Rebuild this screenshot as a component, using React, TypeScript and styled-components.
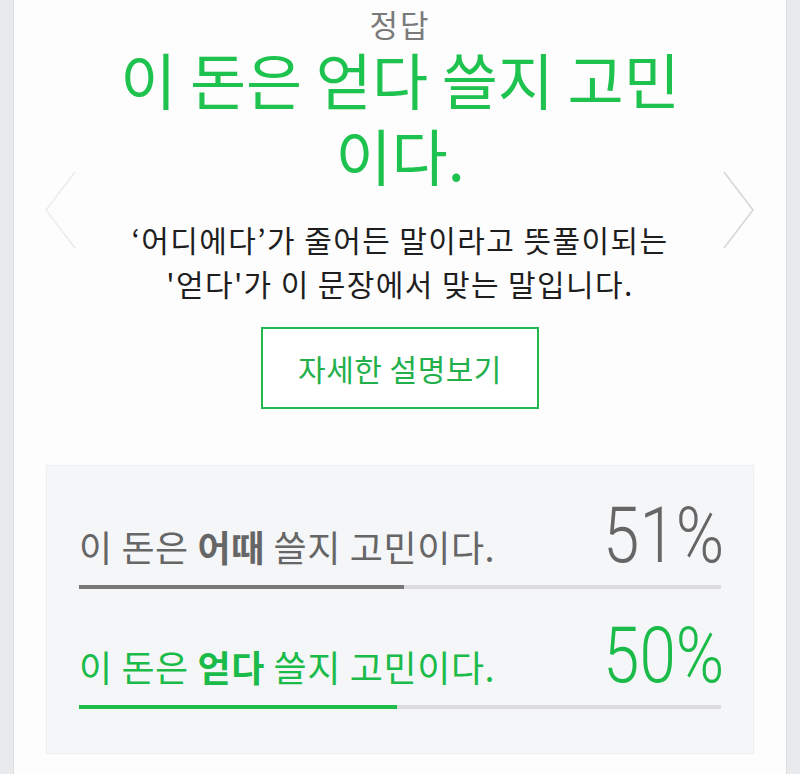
import React from "react";
import styled, { createGlobalStyle } from "styled-components";

const GlobalStyle = createGlobalStyle`
  html, body {
    margin: 0;
    padding: 0;
    background: #e9eaec;
    font-family: "Noto Sans CJK KR", "Noto Sans", sans-serif;
  }
  * { box-sizing: border-box; }
`;

const Page = styled.div`
  padding: 0 13px;
  min-height: 774px;
  overflow: hidden;
`;

const Card = styled.section`
  position: relative;
  background: #fdfdfd;
  border-left: 1px solid #dcdde0;
  border-right: 1px solid #dcdde0;
  min-height: 800px;
  padding-top: 6px;
  display: flex;
  flex-direction: column;
  align-items: center;
`;

const Label = styled.div`
  font-size: 31px;
  line-height: 36px;
  letter-spacing: 2px;
  color: #7a7a7a;
  text-align: center;
`;

const Answer = styled.h1`
  margin: -1px 0 0;
  font-size: 61px;
  line-height: 76px;
  font-weight: 400;
  color: #1ec24e;
  text-align: center;
`;

const Explain = styled.p`
  margin: 24px 0 0;
  font-size: 30px;
  line-height: 44px;
  letter-spacing: 1.4px;
  color: #1e1e1e;
  text-align: center;
`;

const DetailButton = styled.button`
  margin-top: 22px;
  width: 278px;
  height: 82px;
  border: 2px solid #22b84b;
  background: #fff;
  color: #22b04a;
  font-family: inherit;
  font-size: 30px;
  letter-spacing: 0.5px;
  cursor: pointer;
`;

const Arrow = styled.button<{ $side: "left" | "right" }>`
  position: absolute;
  top: 170px;
  ${(p) => (p.$side === "left" ? "left: 30px;" : "right: 31px;")}
  width: 34px;
  height: 80px;
  padding: 0;
  border: 0;
  background: transparent;
`;

const Stats = styled.div`
  align-self: stretch;
  margin: 56px 32px 0;
  background: #f5f6f8;
  border: 1px solid #eceef1;
  padding: 31px 32px 44px;
  display: flex;
  flex-direction: column;
  gap: 28px;
`;

const Option = styled.div``;

const OptionHead = styled.div<{ $correct?: boolean }>`
  display: flex;
  justify-content: space-between;
  align-items: baseline;
  color: ${(p) => (p.$correct ? "#1bbb49" : "#666666")};
`;

const OptionText = styled.span`
  font-size: 36px;
  letter-spacing: 0.6px;
  b { font-weight: 700; }
`;

const Percent = styled.span`
  font-family: Roboto, "Noto Sans", sans-serif;
  font-weight: 300;
  font-size: 78px;
  line-height: 78px;
  display: inline-block;
  margin-right: -3px;
  transform: scaleX(0.84);
  transform-origin: right center;
`;

const Track = styled.div`
  margin-top: 10px;
  height: 4px;
  background: #dcdcde;
`;

const Fill = styled.div<{ $correct?: boolean }>`
  height: 100%;
  background: ${(p) => (p.$correct ? "#1cbd4a" : "#777777")};
`;

const Chevron = ({ dir }: { dir: "left" | "right" }) => (
  <svg width="34" height="80" viewBox="0 0 34 80">
    <polyline
      points={dir === "left" ? "31,2 2,40 31,78" : "3,2 32,40 3,78"}
      fill="none"
      stroke={dir === "left" ? "#ececec" : "#d6d6d6"}
      strokeWidth="1.5"
    />
  </svg>
);

const options = [
  { pre: "이 돈은 ", key: "어때", post: " 쓸지 고민이다.", pct: 51, fill: 50.6, correct: false },
  { pre: "이 돈은 ", key: "얻다", post: " 쓸지 고민이다.", pct: 50, fill: 49.6, correct: true },
];

export default function App() {
  return (
    <>
      <GlobalStyle />
      <Page>
        <Card>
          <Arrow $side="left" aria-label="이전">
            <Chevron dir="left" />
          </Arrow>
          <Arrow $side="right" aria-label="다음">
            <Chevron dir="right" />
          </Arrow>
          <Label>정답</Label>
          <Answer>
            이 돈은 얻다 쓸지 고민
            <br />
            이다.
          </Answer>
          <Explain>
            ‘어디에다’가 줄어든 말이라고 뜻풀이되는
            <br />
            '얻다'가 이 문장에서 맞는 말입니다.
          </Explain>
          <DetailButton>자세한 설명보기</DetailButton>
          <Stats>
            {options.map((o) => (
              <Option key={o.key}>
                <OptionHead $correct={o.correct}>
                  <OptionText>
                    {o.pre}
                    <b>{o.key}</b>
                    {o.post}
                  </OptionText>
                  <Percent>{o.pct}%</Percent>
                </OptionHead>
                <Track>
                  <Fill $correct={o.correct} style={{ width: `${o.fill}%` }} />
                </Track>
              </Option>
            ))}
          </Stats>
        </Card>
      </Page>
    </>
  );
}
